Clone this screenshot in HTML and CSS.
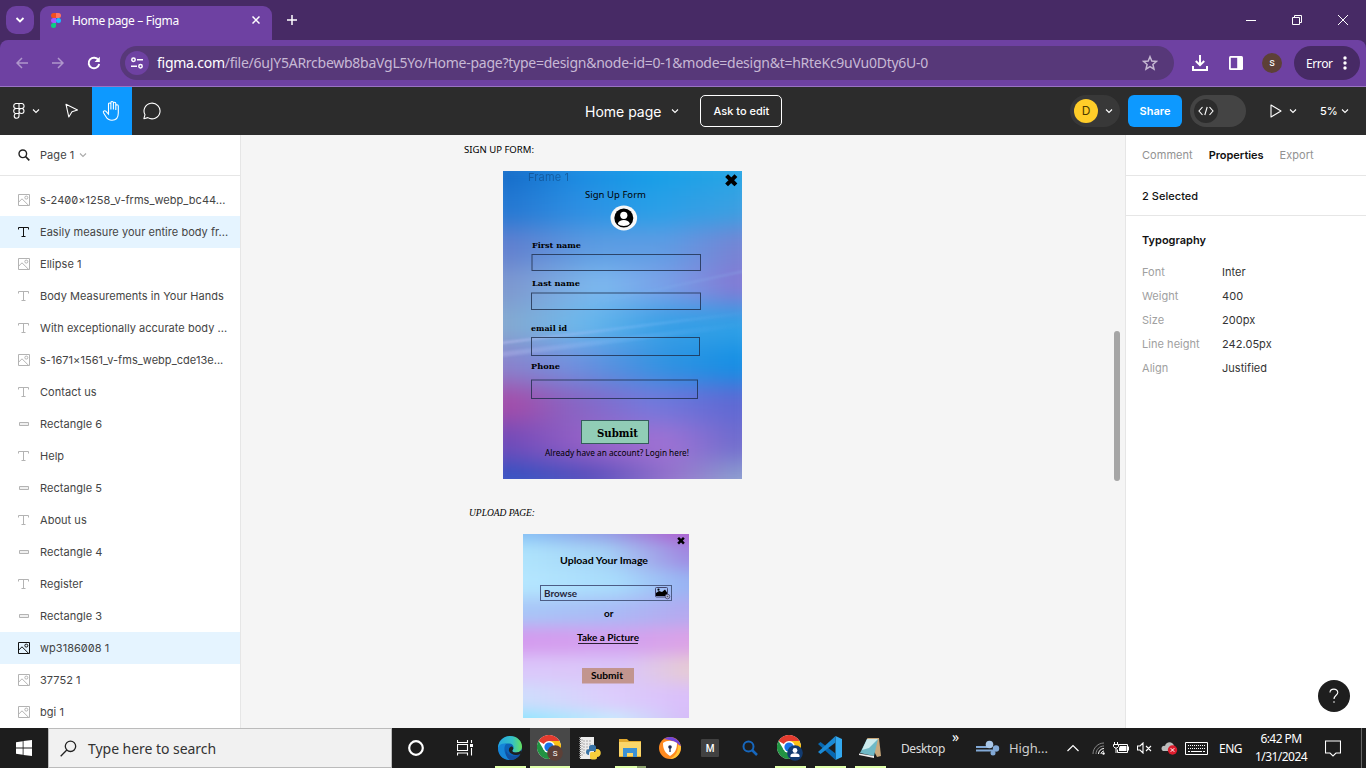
FILE: index.html
```html
<!DOCTYPE html>
<html lang="en">
<head>
<meta charset="utf-8">
<title>Home page – Figma</title>
<link rel="stylesheet" href="styles.css">
</head>
<body>
<svg class="defs" width="0" height="0">
  <defs>
    <symbol id="chev" viewBox="0 0 8 8"><path d="M1 2.500 4 5.500 7 2.500" fill="none" stroke="currentColor" stroke-width="1.100"/></symbol>
    <symbol id="image" viewBox="0 0 12 12"><path d="M.5.5h11v11H.5zM.8 8 4 4.800 10.500 11.300" fill="none" stroke="currentColor"/><circle cx="8.300" cy="3.600" r="1.500" fill="none" stroke="currentColor"/></symbol>
    <symbol id="text" viewBox="0 0 12 12"><path d="M.5 3.500V1.500h10v2M5.500 1.500v9M3.500 10.500h4" fill="none" stroke="currentColor"/></symbol>
    <symbol id="rect" viewBox="0 0 12 12"><path d="M1.500 4.500h9v3h-9z" fill="#f0f0f0" stroke="currentColor"/></symbol>
    <symbol id="chrome" viewBox="0 0 24 24"><circle cx="12" cy="12" r="12" fill="#fff"/><path d="M12 12 1.600 6A12 12 0 0 1 22.400 6z" fill="#e33b2e"/><path d="M12 6h10.400A12 12 0 0 1 12 24l5.200-9z" fill="#fbc116"/><path d="M1.600 6A12 12 0 0 0 12 24l5.200-9H6.800z" fill="#229342"/><circle cx="12" cy="12" r="6" fill="#fff"/><circle cx="12" cy="12" r="4.600" fill="#1a73e8"/></symbol>
  </defs>
</svg>
<div class="window">
  <header class="tabstrip">
    <div class="tab-search"><svg width="10" height="10" viewBox="0 0 10 10"><path d="M1.500 3 5 6.500 8.500 3" fill="none" stroke="#fff" stroke-width="1.800"/></svg></div>
    <div class="tab">
      <svg width="10" height="15" viewBox="0 0 10 15"><path d="M5 0H2.500a2.500 2.500 0 0 0 0 5H5z" fill="#f24e1e"/><path d="M5 0h2.500a2.500 2.500 0 0 1 0 5H5z" fill="#ff7262"/><path d="M5 5H2.500a2.500 2.500 0 0 0 0 5H5z" fill="#a259ff"/><circle cx="7.500" cy="7.500" r="2.500" fill="#1abcfe"/><path d="M5 10H2.500A2.500 2.500 0 1 0 5 12.500z" fill="#0acf83"/></svg>
      <span class="tab-title">Home page – Figma</span>
      <svg class="tab-close" width="8" height="8" viewBox="0 0 8 8"><path d="M.5.5l7 7M7.500.5l-7 7" stroke="#fff" stroke-width="1.500"/></svg>
    </div>
    <svg class="new-tab" width="10" height="10" viewBox="0 0 10 10"><path d="M5 0v10M0 5h10" stroke="#fff" stroke-width="1.500"/></svg>
    <div class="win-buttons">
      <svg width="10" height="10" viewBox="0 0 10 10"><path d="M0 5.500h10" stroke="#fff"/></svg>
      <svg width="10" height="10" viewBox="0 0 10 10"><path d="M.5 2.500h7v7h-7zM2.500 2.500v-2h7v7h-2" fill="none" stroke="#fff"/></svg>
      <svg width="10" height="10" viewBox="0 0 10 10"><path d="M0 0l10 10M10 0 0 10" stroke="#fff"/></svg>
    </div>
  </header>
  <div class="toolbar-back">
  <div class="toolbar">
    <svg class="dim" width="12" height="12" viewBox="0 0 12 12"><path d="M12 6H1M6 1 1 6l5 5" fill="none" stroke="#fff" stroke-width="1.500"/></svg>
    <svg class="dim" width="12" height="12" viewBox="0 0 12 12"><path d="M0 6h11M6 1l5 5-5 5" fill="none" stroke="#fff" stroke-width="1.500"/></svg>
    <svg width="14" height="14" viewBox="0 0 14 14"><path d="M11.500 4.200A5.300 5.300 0 1 0 12.200 8" fill="none" stroke="#fff" stroke-width="1.900"/><path d="M12.800.8V6H7.600z" fill="#fff"/></svg>
    <div class="omnibox">
      <span class="site-info"><svg width="12" height="12" viewBox="0 0 12 12"><g fill="none" stroke="#fff" stroke-width="1.500"><circle cx="2.500" cy="2.800" r="1.700"/><circle cx="9.500" cy="9.200" r="1.700"/><path d="M6 2.800h6M0 9.200h6"/></g></svg></span>
      <span class="url"><b>figma.com</b>/file/6uJY5ARrcbewb8baVgL5Yo/Home-page?type=design&amp;node-id=0-1&amp;mode=design&amp;t=hRteKc9uVu0Dty6U-0</span>
      <svg class="star" width="16" height="16" viewBox="0 0 16 16"><path d="M8 1.700 9.800 6l4.700.4-3.600 3.100 1.100 4.600L8 11.600l-4 2.500 1.100-4.600L1.500 6.400 6.200 6z" fill="none" stroke="#c5b8d2" stroke-width="1.500"/></svg>
    </div>
    <svg class="download" width="16" height="16" viewBox="0 0 16 16"><path d="M8 0v10M3.800 6 8 10.200 12.200 6M1 11v4h14v-4" fill="none" stroke="#fff" stroke-width="2"/></svg>
    <svg class="side" width="14" height="14" viewBox="0 0 14 14"><rect width="14" height="14" rx="1.500" fill="#fff"/><path d="M1.800 1.800h6.400v10.400H1.800z" fill="#6e41a2"/></svg>
    <span class="profile">s</span>
    <span class="error">Error<svg width="4" height="14" viewBox="0 0 4 14" fill="#fff"><circle cx="2" cy="2" r="1.700"/><circle cx="2" cy="7" r="1.700"/><circle cx="2" cy="12" r="1.700"/></svg></span>
  </div>
  </div>

  <nav class="figbar">
    <div class="fig-left">
      <svg class="menu" width="12" height="16" viewBox="0 0 12 16"><path d="M6 .5H3.200a2.400 2.400 0 0 0 0 5H6zM6 .5h2.600a2.400 2.400 0 0 1 0 5H6zM6 5.500H3.200a2.400 2.400 0 0 0 0 5H6zM6 10.500H3.200A2.400 2.400 0 1 0 6 13zM6 8a2.500 2.500 0 1 0 5 0 2.500 2.500 0 0 0-5 0" fill="none" stroke="#fff" stroke-width="1.100"/></svg>
      <svg class="menu-chev" width="8" height="8"><use href="#chev"/></svg>
      <svg class="cursor" width="14" height="16" viewBox="0 0 14 16"><path d="M1 1.300 12.500 7 7 8.800 3.800 14z" fill="none" stroke="#fff" stroke-width="1.100" stroke-linejoin="round"/></svg>
      <span class="hand"><svg width="20" height="22" viewBox="0 0 20 22"><path d="M6.500 12V4.200c0-1.700 2.400-1.700 2.400 0V9.500 2.700c0-1.700 2.500-1.700 2.500 0v6.800-6c0-1.700 2.400-1.700 2.400 0V10 6c0-1.600 2.500-1.600 2.500 0v7c0 4.500-2.500 7.300-6.300 7.300-3.300 0-5-1.600-6.300-4L1.500 12.700c-.8-1.700 1.300-2.600 2.500-1.400L6.500 14z" fill="none" stroke="#fff" stroke-width="1.100"/></svg></span>
      <svg class="comment" width="18" height="18" viewBox="0 0 18 18"><path d="M.9 16.700 2 12.700a8 7.800 0 1 1 2.800 2.900z" fill="none" stroke="#fff" stroke-width="1.100" stroke-linejoin="round"/></svg>
    </div>
    <div class="fig-title"><span class="file-name">Home page</span><svg width="8" height="8"><use href="#chev"/></svg><span class="ask">Ask to edit</span></div>
    <div class="fig-right">
      <span class="user"><i>D</i><svg width="8" height="8"><use href="#chev"/></svg></span>
      <span class="share">Share</span>
      <span class="devmode"><i><svg width="16" height="10" viewBox="0 0 16 10"><path d="M4.500 1 1 5l3.500 4M11.500 1 15 5l-3.500 4M9.200 1 6.800 9" fill="none" stroke="#fff" stroke-width="1.100"/></svg></i></span>
      <svg class="play" width="12" height="14" viewBox="0 0 12 14"><path d="M1 1v12l10-6z" fill="none" stroke="#fff" stroke-width="1.100" stroke-linejoin="round"/></svg>
      <svg class="play-chev" width="8" height="8"><use href="#chev"/></svg>
      <span class="zoom">5%</span>
      <svg width="8" height="8"><use href="#chev"/></svg>
    </div>
  </nav>

  <main class="workspace">
    <aside class="layers">
      <div class="page-head"><svg width="12" height="12" viewBox="0 0 12 12"><circle cx="4.800" cy="4.800" r="3.800" fill="none" stroke="#222" stroke-width="1.400"/><path d="M7.500 7.500 11.300 11.300" stroke="#222" stroke-width="1.700"/></svg><span>Page 1</span><svg class="page-chev" width="8" height="8"><use href="#chev"/></svg></div>
      <ul class="layer-list">
        <li><svg><use href="#image"/></svg><span>s-2400×1258_v-frms_webp_bc44...</span></li>
        <li class="on"><svg><use href="#text"/></svg><span>Easily measure your entire body fr...</span></li>
        <li><svg><use href="#image"/></svg><span>Ellipse 1</span></li>
        <li><svg><use href="#text"/></svg><span>Body Measurements in Your Hands</span></li>
        <li><svg><use href="#text"/></svg><span>With exceptionally accurate body ...</span></li>
        <li><svg><use href="#image"/></svg><span>s-1671×1561_v-fms_webp_cde13e...</span></li>
        <li><svg><use href="#text"/></svg><span>Contact us</span></li>
        <li><svg><use href="#rect"/></svg><span>Rectangle 6</span></li>
        <li><svg><use href="#text"/></svg><span>Help</span></li>
        <li><svg><use href="#rect"/></svg><span>Rectangle 5</span></li>
        <li><svg><use href="#text"/></svg><span>About us</span></li>
        <li><svg><use href="#rect"/></svg><span>Rectangle 4</span></li>
        <li><svg><use href="#text"/></svg><span>Register</span></li>
        <li><svg><use href="#rect"/></svg><span>Rectangle 3</span></li>
        <li class="on"><svg><use href="#image"/></svg><span>wp3186008 1</span></li>
        <li><svg><use href="#image"/></svg><span>37752 1</span></li>
        <li><svg><use href="#image"/></svg><span>bgi 1</span></li>
      </ul>
    </aside>

    <section class="canvas">
      <div class="art signup">
        <div class="mesh"><i class="s1"></i><i class="s2"></i><i class="s3"></i><i class="s4"></i><i class="s5"></i><i class="s6"></i><i class="s7"></i><i class="s8"></i><i class="s9"></i></div>
        <div class="streak a"></div><div class="streak b"></div><div class="streak c"></div>
      </div>
      <div class="art upload">
        <div class="mesh"><i class="u1"></i><i class="u2"></i><i class="u3"></i><i class="u4"></i><i class="u5"></i><i class="u6"></i><i class="u7"></i><i class="u8"></i></div>
      </div>
      <svg class="drawing" width="885" height="593" viewBox="241 135 885 593">
        <text class="noto" x="464" y="153" font-size="9.500" textLength="70" lengthAdjust="spacingAndGlyphs">SIGN UP FORM:</text>
        <text class="inter" x="528" y="181" font-size="11" fill="#0c3c70" opacity=".5" textLength="41">Frame 1</text>
        <text class="noto" x="585" y="198" font-size="9.500" textLength="61" lengthAdjust="spacing">Sign Up Form</text>
        <path d="M728 177l6.500 6.500M734.500 177l-6.500 6.500" stroke="#000" stroke-width="4" stroke-linecap="square"/>
        <ellipse cx="623.800" cy="218" rx="13.300" ry="12.500" fill="#f8f8f8"/>
        <circle cx="623.800" cy="218" r="9.500" fill="#000"/><circle cx="623.800" cy="215.300" r="3.600" fill="#fff"/><path d="M617.800 223.800c1-5 11-5 12 0-2.500 3-9.500 3-12 0z" fill="#fff"/>
        <g class="deco">
          <text x="532" y="247.500" textLength="49" lengthAdjust="spacingAndGlyphs">First name</text>
          <text x="532" y="286" textLength="48" lengthAdjust="spacingAndGlyphs">Last name</text>
          <text x="531" y="330.500" textLength="36" lengthAdjust="spacingAndGlyphs">email id</text>
          <text x="531" y="369" textLength="29" lengthAdjust="spacingAndGlyphs">Phone</text>
        </g>
        <g fill="none" stroke="#1c2c48" stroke-opacity=".78">
          <rect x="532" y="254.500" width="168.500" height="16"/><rect x="531.500" y="293" width="169" height="16.500"/><rect x="531.500" y="337.500" width="168" height="18"/><rect x="531.500" y="380" width="166" height="18.500"/>
        </g>
        <rect x="581.500" y="420.500" width="67" height="23" fill="#91cdb6" stroke="#355b5c"/>
        <text class="deco big" x="597" y="436.500" textLength="41" lengthAdjust="spacingAndGlyphs">Submit</text>
        <text class="noto" x="545" y="456" font-size="8.800" textLength="144" lengthAdjust="spacingAndGlyphs">Already have an account? Login here!</text>
        <text class="serif" x="469" y="516" font-size="10.500" textLength="66" lengthAdjust="spacingAndGlyphs">UPLOAD PAGE:</text>
        <path d="M679 538.700l4 4M683 538.700l-4 4" stroke="#000" stroke-width="2.500" stroke-linecap="square"/>
        <g class="lato">
          <text x="560" y="564" textLength="88" lengthAdjust="spacingAndGlyphs">Upload Your Image</text>
          <rect x="540.500" y="585.500" width="131" height="15" fill="none" stroke="#4d5c85"/>
          <text x="544" y="597" fill="#26263c" textLength="33" lengthAdjust="spacingAndGlyphs">Browse</text>
          <text x="604" y="617" textLength="9.500" lengthAdjust="spacingAndGlyphs">or</text>
          <text x="577" y="641" textLength="62" lengthAdjust="spacingAndGlyphs">Take a Picture</text>
          <path d="M578 643.500h60" stroke="#2b2033"/>
          <rect x="582" y="668" width="52" height="15.500" fill="#c2958f"/>
          <text x="591" y="679" textLength="32" lengthAdjust="spacingAndGlyphs">Submit</text>
        </g>
        <rect x="655.500" y="587.500" width="12" height="9.500" rx="1" fill="none" stroke="#44476e"/><path d="M656 596v-3l3-2 3 1 3-2.500 2 3v3.500z" fill="#000"/><circle cx="658.500" cy="589.700" r="1.100"/><circle cx="667.500" cy="596.500" r="2.300" fill="#a8b0dc" stroke="#44476e" stroke-width=".8"/><circle cx="667.500" cy="596.500" r=".8" fill="#555"/>
      </svg>
      <i class="scroll"></i>
    </section>

    <aside class="props">
      <div class="prop-tabs"><span>Comment</span><b>Properties</b><span>Export</span></div>
      <div class="selected">2 Selected</div>
      <h2>Typography</h2>
      <dl>
        <dt>Font</dt><dd>Inter</dd>
        <dt>Weight</dt><dd>400</dd>
        <dt>Size</dt><dd>200px</dd>
        <dt>Line height</dt><dd>242.05px</dd>
        <dt>Align</dt><dd>Justified</dd>
      </dl>
      <div class="help"><svg width="10" height="16" viewBox="0 0 10 16"><path d="M1 4.500C1 0 8.800 0 8.800 4.500 8.800 7.300 5 7.300 5 11" fill="none" stroke="#fff" stroke-width="1.100"/><circle cx="5" cy="14" r=".8" fill="#fff"/></svg></div>
    </aside>
  </main>

  <footer class="taskbar">
    <span class="start"><svg width="16" height="16" viewBox="0 0 16 16"><path d="M0 2.200 6.700 1.300v6.300H0zM7.500 1.100 16 0v7.600H7.500zM0 8.400h6.700v6.300L0 13.800zM7.500 8.400H16V16l-8.500-1.100z" fill="#fff"/></svg></span>
    <div class="search"><svg width="17" height="17" viewBox="0 0 17 17"><circle cx="10.500" cy="6.300" r="5.200" fill="none" stroke="#222" stroke-width="1.300"/><path d="M6.800 10 .7 16.200" stroke="#222" stroke-width="1.300"/></svg><span>Type here to search</span></div>
    <div class="apps">
      <span class="sys"><svg width="16" height="16" viewBox="0 0 16 16"><circle cx="8" cy="8" r="6.800" fill="none" stroke="#fff" stroke-width="2.200"/></svg></span>
      <span class="sys"><svg width="16" height="16" viewBox="0 0 16 16"><path d="M.5 0v2.500h10V0M.5 15.500V13h10v2.500M.5 4.500h10v6H.5zM14.500 0v3M14.500 8v7.500" fill="none" stroke="#fff" stroke-width="1.100"/><path d="M13 4h3v3h-3z" fill="#fff"/></svg></span>
      <span class="app run"><svg width="24" height="24" viewBox="0 0 24 24"><defs><linearGradient id="e1"><stop stop-color="#26a8e0"/><stop offset=".6" stop-color="#35c1c5"/><stop offset="1" stop-color="#66e05a"/></linearGradient></defs><circle cx="12" cy="12" r="12" fill="#0c63b8"/><path d="M0 11C1 4 6 0 12 0c7 0 12 5 12 10.500 0 4-3 6-6 6-3.500 0-4.500-1.500-3-3 1.500-2.500 0-6-4-6C6 7.500 2 9 0 13z" fill="url(#e1)"/><path d="M0 12c1-3.500 5-5 8.500-4.200C5 10 5.500 20 13 24 5 24.500 0 19 0 12z" fill="#1686d8"/><path d="M8 13c0 6 7 9 14 5-2 4-6 6-10 6-4-2-5-8-4-11z" fill="#1350a0"/><path d="M15 13.500c-1.500 1.500-.5 3 3 3 2 0 4-.8 5.200-2.200L24 17l-1.500 1c-5 2-10 .5-11.500-3-.5-2 .5-4.500 3-4.500 1.500 1 1.500 2 1 3z" fill="#1f1f1f"/></svg></span>
      <span class="app run active"><svg width="26" height="26" viewBox="0 0 26 26"><use href="#chrome" width="24" height="24"/><circle cx="18" cy="18" r="7.800" fill="#5d4037"/><text x="18" y="21" fill="#fff" font-family="Roboto" font-size="8" text-anchor="middle">S</text></svg></span>
      <span class="app"><svg width="24" height="24" viewBox="0 0 24 24"><path d="M2 1h14v20l-2 2H2z" fill="#ececec"/><path d="M4 3v18M5 5h9M5 8h9M5 11h8M5 14h6M5 17h5" stroke="#aaa" stroke-dasharray="2 1"/><path d="M2 1v22" stroke="#777" stroke-width="2" stroke-dasharray="1 1"/><path d="M11 15v-4c0-3 7-3 7 0v4h-5c-2 0-2 2-2 4-4 0-4-6 0-6h4" fill="#3874a7"/><path d="M18 13h1c5 0 5 8 0 8v1c0 2-7 2-7 0v-4c0-2 1-2 3-2 3 0 3-1 3-3z" fill="#f7cf3c"/></svg></span>
      <span class="app run two"><svg width="22" height="20" viewBox="0 0 22 20"><path d="M0 1h8l2 2h12v16H0z" fill="#e2a92d"/><path d="M0 4h22v14H0z" fill="#fbd669"/><path d="M4 19v-9h14v9h-4v-4H8v4z" fill="#3c91d5"/></svg></span>
      <span class="app"><svg width="24" height="24" viewBox="0 0 24 24"><circle cx="12" cy="12" r="11" fill="#ff8a20"/><path d="M6 3a11 11 0 0 1 17 9c-1-5-9-8-17-9z" fill="#7145dc"/><path d="M23 10c0 7-4 13-11 13 5-3 8-6 8-14z" fill="#ffc739"/><path d="M5 7c4-3 9-3 14 0 0 6-2 10-7 13-5-3-7-7-7-13z" fill="#fff"/><circle cx="12" cy="11" r="1.800" fill="#222c50"/><path d="M12 11v5" stroke="#222c50" stroke-width="1.300"/></svg></span>
      <span class="app"><b class="m">M</b></span>
      <span class="app"><svg width="16" height="16" viewBox="0 0 16 16"><circle cx="6.500" cy="6.500" r="5" fill="none" stroke="#1767bd" stroke-width="2"/><path d="M10 10l5 5" stroke="#1767bd" stroke-width="2.500"/></svg></span>
      <span class="app run"><svg width="26" height="26" viewBox="0 0 26 26"><use href="#chrome" width="24" height="24"/><circle cx="18" cy="18" r="7.800" fill="#123b70"/><circle cx="18" cy="15.500" r="2.400" fill="#fff"/><path d="M13.500 22v-1.500c0-3 9-3 9 0V22z" fill="#fff"/></svg></span>
      <span class="app run"><svg width="24" height="24" viewBox="0 0 24 24"><path d="M17.500 0 24 3v18l-6.500 3z" fill="#33a9f0"/><path d="M0 8l2.500-2L17.500 17.500V24z" fill="#0868b0"/><path d="M17.500 0 0 16l2.500 2L17.500 6.500z" fill="#1b8ad5"/></svg></span>
      <span class="app run"><svg width="24" height="24" viewBox="0 0 24 24"><path d="M9 2h12l2 18-4 1z" fill="#c8a87c"/><path d="M9 3h11l-4 17L2 17z" fill="#6fb9c6"/><path d="M9 3h11l-9 9-7 2z" fill="#cdebed"/><path d="M1 17.500l15 2.500v2L1 19z" fill="#eee"/></svg></span>
    </div>
    <span class="desktop">Desktop</span><span class="more">»</span>
    <svg class="wind" width="24" height="18" viewBox="0 0 24 18"><path d="M0 8h13M0 11.500h18" stroke="#82a9d6" stroke-width="2.200"/><circle cx="13.500" cy="5.500" r="3.800" fill="#a9c7e8"/><circle cx="20" cy="9.500" r="3.200" fill="#82a9d6"/><circle cx="17" cy="14" r="2.500" fill="#82a9d6"/></svg>
    <span class="weather">High...</span>
    <svg class="up" width="12" height="8" viewBox="0 0 12 8"><path d="M.5 7 6 1.500 11.500 7" fill="none" stroke="#fff" stroke-width="1.200"/></svg>
    <svg class="wifi" width="13" height="13" viewBox="0 0 13 13"><g fill="none"><path d="M1 12C1 6 6 1 12 1M4 12c0-4.500 3.500-8 8-8" stroke="#888"/><path d="M6.500 12c0-3 2.500-5.500 5.500-5.500M9 12c0-1.500 1.500-3 3-3" stroke="#fff"/></g><circle cx="11.500" cy="11.500" r="1.200" fill="#fff"/></svg>
    <svg class="battery" width="17" height="12" viewBox="0 0 17 12"><path d="M5.500 2.500h9v8h-10v-3M15.500 4.500v4M1.500 0v2M4.500 0v2M.5 2.500h5v2l-1.500 1.500h-2L.5 4.500zM3 6v5" fill="none" stroke="#fff"/><path d="M7 4h6.500v5H6V6z" fill="#fff"/></svg>
    <svg class="mute" width="16" height="12" viewBox="0 0 16 12"><path d="M.5 4v4H3l3 3V1L3 4zM9 4l5 5M14 4 9 9" fill="none" stroke="#fff" stroke-width="1.100"/></svg>
    <svg class="cloud" width="17" height="14" viewBox="0 0 17 14"><path d="M2 10C-1 8 1 4 4 5c1-5 8-5 9 0 3 2 1 6-2 5z" fill="#bbb"/><circle cx="11.500" cy="9" r="4.700" fill="#dd1c2d"/><path d="M9.700 7.200l3.600 3.600M13.300 7.200 9.700 10.800" stroke="#fff"/></svg>
    <svg class="keyboard" width="23" height="13" viewBox="0 0 23 13"><path d="M.5.5h22v12H.5z" fill="none" stroke="#fff"/><path d="M3 3.500h17M3 6.500h17" stroke="#fff" stroke-dasharray="1 1"/><path d="M3 9.500h2M6 9.500h11M18 9.500h2" stroke="#fff"/></svg>
    <span class="lang">ENG</span>
    <div class="clock"><span>6:42 PM</span><span>1/31/2024</span></div>
    <svg class="notice" width="16" height="17" viewBox="0 0 16 17"><path d="M.5 1h15v12H11l-3 3-3-3H.5z" fill="none" stroke="#fff" stroke-width="1.100"/></svg>
    <i class="peek"></i>
  </footer>
</div>
</body>
</html>
```

FILE: styles.css
```css
* { box-sizing: border-box; }
body { margin: 0; overflow: hidden; font-family: Inter, sans-serif; }
svg { display: block; flex: none; }
i { font-style: normal; }
.defs { position: absolute; }
.window { width: 1366px; height: 768px; display: flex; flex-direction: column; }

/* browser chrome */
.tabstrip { height: 40px; flex: none; background: #472a65; display: flex; padding-left: 6px; font-family: "Noto Sans", sans-serif; }
.tab-search { width: 28px; height: 28px; margin: 6px 6px 0 0; border-radius: 10px; background: #6e41a2; display: grid; place-items: center; }
.tab { width: 232px; height: 34px; margin-top: 6px; border-radius: 9px 9px 0 0; background: #6e41a2; display: flex; align-items: center; padding: 0 12px 6px 11px; }
.tab-title { margin: 0 auto 0 11px; color: #fff; font-size: 12px; letter-spacing: -.33px; }
.new-tab { margin: 15px 0 0 15px; }
.win-buttons { margin: 15px 18px 0 auto; display: flex; gap: 36px; }
.toolbar-back { background: #472a65; flex: none; }
.toolbar { height: 47px; background: #6e41a2; border-radius: 8px 8px 0 0; border-bottom: 1px solid #9a73c4; display: flex; align-items: center; padding-left: 16px; font-family: "Noto Sans", sans-serif; color: #fff; }
.toolbar > svg { margin-right: 23px; }
.toolbar > .dim { opacity: .45; margin-right: 24px; }
.toolbar > svg:nth-child(3) { margin: 0 19px 0 -1px; }
.omnibox { width: 1054px; height: 34px; border-radius: 17px; background: #573879; display: flex; align-items: center; padding-left: 5px; }
.site-info { width: 24px; height: 24px; border-radius: 50%; background: #6e41a2; display: grid; place-items: center; }
.url { margin: -2px 0 0 8px; font-size: 14px; letter-spacing: -.255px; color: #c7b9d5; white-space: nowrap; }
.url b { font-weight: 400; color: #fff; }
.star { margin: 0 16px 0 auto; }
.toolbar > .download { margin: 0 0 0 18px; }
.toolbar > .side { margin: 0 0 0 21px; }
.profile { width: 20px; height: 20px; margin-left: 19px; border-radius: 50%; background: #5d4037; font: 11px/19px Roboto, sans-serif; text-align: center; }
.error { width: 66px; height: 34px; margin-left: 12px; border-radius: 17px; background: #472a65; display: flex; align-items: center; padding-left: 12px; font-size: 12px; letter-spacing: -.4px; }
.error svg { margin-left: 10px; }

/* editor bar */
.figbar { height: 48px; flex: none; background: #2c2c2c; color: #fff; display: grid; grid-template-columns: 585px 1fr 296px; align-items: center; }
.fig-left, .fig-title, .fig-right { display: flex; align-items: center; height: 48px; }
.menu { margin-left: 13px; }
.menu-chev { margin-left: 7px; }
.cursor { margin: 0 13px 0 25px; }
.hand { width: 40px; height: 48px; background: #0d99ff; display: grid; place-items: center; }
.comment { margin-left: 11px; }
.file-name { font-size: 14px; letter-spacing: 0; margin-right: 10px; }
.ask { width: 82px; height: 32px; margin-left: 21px; border: 1px solid #fff; border-radius: 5px; font-size: 11px; font-weight: 500; line-height: 30px; text-align: center; letter-spacing: 0; }
.user { width: 50px; height: 32px; border-radius: 16px; background: #383838; display: flex; align-items: center; padding-left: 4px; }
.user i { width: 24px; height: 24px; border-radius: 50%; background: #ffcd29; color: #4b3a00; font-size: 12px; line-height: 24px; text-align: center; margin-right: 7px; }
.share { width: 54px; height: 32px; margin-left: 8px; border-radius: 6px; background: #0d99ff; font-size: 11px; font-weight: 600; line-height: 32px; text-align: center; }
.devmode { width: 56px; height: 32px; margin-left: 8px; border-radius: 16px; background: #444; padding: 4px; }
.devmode i { width: 24px; height: 24px; border-radius: 50%; background: #2c2c2c; display: grid; place-items: center; }
.play { margin-left: 24px; }
.play-chev { margin-left: 7px; }
.zoom { margin: 0 5px 0 23px; font-size: 11px; font-weight: 500; width: 16px; white-space: nowrap; }

/* panels */
.workspace { height: 593px; flex: none; display: flex; }
.layers { width: 241px; border-right: 1px solid #e6e6e6; background: #fff; color: #444; font-size: 11px; }
.page-head { height: 41px; border-bottom: 1px solid #e6e6e6; display: flex; align-items: center; padding-left: 18px; }
.page-head span { margin-left: 10px; letter-spacing: .06px; }
.page-chev { margin-left: 5px; color: #aaa; }
.layer-list { list-style: none; margin: 8px 0 0; padding: 0; letter-spacing: .04px; font-feature-settings: "zero"; }
.layer-list li { height: 32px; display: flex; align-items: center; gap: 10px; padding-left: 18px; white-space: nowrap; }
.layer-list svg { width: 12px; height: 12px; color: #b3b3b3; }
.layer-list .on { background: #e5f4ff; }
.layer-list .on svg { color: #111; }
.props { width: 241px; border-left: 1px solid #e6e6e6; background: #fff; font-size: 11px; letter-spacing: .04px; color: #333; position: relative; }
.prop-tabs { height: 41px; border-bottom: 1px solid #e6e6e6; display: flex; gap: 16px; align-items: center; padding-left: 16px; color: #929292; }
.prop-tabs b { color: #111; font-weight: 600; letter-spacing: -.03px; }
.selected { height: 40px; line-height: 40px; border-bottom: 1px solid #e6e6e6; padding-left: 16px; font-weight: 500; color: #111; }
.props h2 { margin: 8px 0; padding-left: 16px; font-size: 11px; font-weight: 600; letter-spacing: 0; line-height: 33px; color: #111; }
.props dl { margin: 0; padding-left: 16px; display: grid; grid-template-columns: 80px 1fr; line-height: 24px; margin-top: -5px; }
.props dt { color: #a0a0a0; }
.props dd { margin: 0; }
.help { position: absolute; right: 16px; bottom: 16px; width: 32px; height: 32px; border-radius: 50%; background: #1e1e1e; display: grid; place-items: center; }

/* artboards on the free canvas */
.canvas { width: 884px; background: #f5f5f5; position: relative; overflow: hidden; }
.drawing { position: absolute; left: 0; top: 0; }
.drawing .noto { font-family: "Noto Sans", sans-serif; }
.drawing .inter { font-family: Inter, sans-serif; }
.drawing .serif { font-family: "Liberation Serif", serif; font-style: italic; }
.drawing .deco { font-family: "DejaVu Serif", serif; font-size: 8px; font-weight: 700; }
.drawing .big { font-size: 11px; }
.drawing .lato { font-family: Lato, sans-serif; font-size: 10px; font-weight: 700; }
.art { position: absolute; overflow: hidden; }
.signup { left: 261.500px; top: 36px; width: 239.500px; height: 308px; }
.upload { left: 282px; top: 399px; width: 166px; height: 184px; }
.mesh { position: absolute; inset: -22px; display: flex; flex-direction: column; filter: blur(12px); }
.mesh i { flex: 1; }
.s1 { background: linear-gradient(90deg, #156cc9 10%, #1a8ce2 35%, #159ee8 60%, #2aa8e4); }
.s2 { background: linear-gradient(90deg, #2478d2 10%, #2c8fe3 35%, #279fe8 60%, #3fa0e0); }
.s3 { background: linear-gradient(90deg, #617fcf 10%, #5c9ce2 40%, #5f9ce4 65%, #7684d4 90%); }
.s4 { background: linear-gradient(90deg, #7d97cf 10%, #7dbaf0 42%, #7aa0e8 65%, #8379d4 90%); }
.s5 { background: linear-gradient(90deg, #85a9cf 8%, #6cb8ec 35%, #389fe6 65%, #2fa0e6 90%); }
.s6 { background: linear-gradient(90deg, #8b82cc 8%, #6f91df 33%, #2f93e2 65%, #158fe4 90%); }
.s7 { background: linear-gradient(90deg, #a44da9 12%, #8b62c0 30%, #7479dc 60%, #5e68d3 90%); }
.s8 { background: linear-gradient(90deg, #704bb9 10%, #9862c7 38%, #a072d4 65%, #706cce 90%); }
.s9 { background: linear-gradient(90deg, #3352c2 12%, #564dbb 40%, #9574cc 68%, #8c9fcf 90%); }
.streak { position: absolute; left: -10px; width: 260px; height: 2px; transform: rotate(-7deg); filter: blur(1px); background: linear-gradient(90deg, rgba(190,190,240,.7), rgba(130,190,250,.5), transparent); }
.a { top: 156px; }
.b { top: 166px; height: 5px; opacity: .5; }
.c { top: 110px; left: 60px; transform: rotate(-12deg); opacity: .35; background: linear-gradient(90deg, transparent, #90c8f5); }
.upload .mesh { filter: blur(8px); }
.u1 { background: linear-gradient(90deg, #83bdf4 12%, #9299e4 50%, #b060cf 85%); }
.u2 { background: linear-gradient(90deg, #aee3fc 12%, #a4d2f6 50%, #a08be2 88%); }
.u3 { background: linear-gradient(90deg, #b4e6fe 12%, #a8dcfc 55%, #98b3f3 88%); }
.u4 { background: linear-gradient(90deg, #a8c6f7 12%, #a8bcf6 50%, #b3aaf0 88%); }
.u5 { background: linear-gradient(90deg, #d49bee 12%, #d3a1ef 60%, #dba2e7 88%); }
.u6 { background: linear-gradient(90deg, #dbc7fa 12%, #dac5f8 60%, #e6cbd5 88%); }
.u7 { background: linear-gradient(90deg, #cfddfc 12%, #dccefc 50%, #dabffa 88%); }
.u8 { background: linear-gradient(90deg, #8ce6ff 12%, #c8edfd 55%, #d5bcf8 88%); }
.scroll { position: absolute; right: 5px; top: 196px; width: 6px; height: 150px; border-radius: 3px; background: #a6a6a6; }

/* taskbar */
.taskbar { height: 40px; flex: none; background: #1d1d1d; color: #fff; display: flex; align-items: center; font-family: "Noto Sans", sans-serif; font-size: 12px; }
.start { width: 48px; padding-left: 16px; }
.search { width: 344px; height: 40px; border: 1px solid #bbb; background: #f1f1f1; display: flex; align-items: center; padding-left: 11px; color: #333; font-size: 14px; letter-spacing: -.04px; }
.search span { margin-left: 11px; }
.apps { display: flex; height: 40px; }
.sys { width: 48px; display: grid; place-items: center; }
.apps .sys:nth-child(2) { width: 50px; }
.app { width: 40px; height: 40px; position: relative; display: grid; place-items: center; }
.active { background: #484848; }
.run::after { content: ""; position: absolute; left: 5px; right: 4px; bottom: 0; height: 2px; background: #dfffaa; }
.active::after { left: 0; right: 0; }
.two::after { background: linear-gradient(90deg, #dfffaa 70%, #8ca26c 70%); }
.m { width: 18px; height: 18px; background: #414141; border-radius: 1px; font: 500 10px/19px Roboto, sans-serif; text-align: center; }
.desktop { margin-left: 11px; letter-spacing: -.4px; width: 44px; color: #ddd; }
.more { font-size: 14px; margin: -24px 0 0 7px; width: 11px; }
.wind { margin-left: 13px; }
.weather { margin-left: 9px; width: 38px; font-size: 13px; letter-spacing: -.1px; white-space: nowrap; color: #ccc; }
.up { margin-left: 20px; }
.wifi { margin-left: 13px; }
.battery { margin-left: 8px; }
.mute { margin-left: 7px; }
.cloud { margin-left: 8px; }
.keyboard { margin-left: 7px; }
.lang { margin-left: 11px; width: 24px; letter-spacing: -.5px; }
.clock { width: 56px; margin-left: 10px; display: flex; flex-direction: column; align-items: center; line-height: 18px; letter-spacing: -.55px; }
.notice { margin-left: 16px; }
.peek { margin-left: auto; width: 5px; height: 40px; border-left: 1px solid #666; }
```
